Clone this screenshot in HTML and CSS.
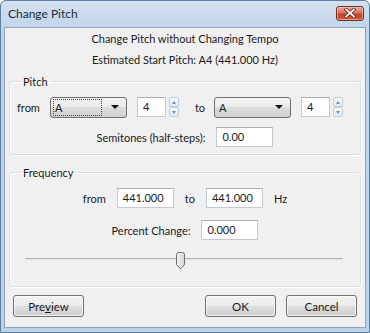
FILE: index.html
```html
<!DOCTYPE html>
<html lang="en">
<head>
    <meta charset="UTF-8">
    <title>Change Pitch</title>
    <link rel="stylesheet" href="styles.css">
</head>
<body>
    <div class="window">
        <div class="titlebar">
            <span class="title">Change Pitch</span>
            <span class="close">
                <svg width="12" height="10" viewBox="0 0 12 10">
                    <path d="M2 1.5 L10 8.5 M10 1.5 L2 8.5" stroke="#5a1a10" stroke-width="3.2" stroke-linecap="square"/>
                    <path d="M2 1.5 L10 8.5 M10 1.5 L2 8.5" stroke="#fff" stroke-width="1.8" stroke-linecap="square"/>
                </svg>
            </span>
        </div>

        <div class="client">
            <p class="info">Change Pitch without Changing Tempo</p>
            <p class="info">Estimated Start Pitch: A4 (441.000 Hz)</p>

            <fieldset class="group">
                <legend>Pitch</legend>
                <div class="row pitch-row">
                    <span class="lbl">from</span>
                    <div class="combo focused"><span class="combo-text">A</span><span class="combo-arrow"></span></div>
                    <div class="spin">
                        <div class="edit small">4</div>
                        <div class="spin-btns">
                            <span class="spin-btn"><i class="up"></i></span>
                            <span class="spin-btn"><i class="down"></i></span>
                        </div>
                    </div>
                    <span class="lbl to">to</span>
                    <div class="combo"><span class="combo-text">A</span><span class="combo-arrow"></span></div>
                    <div class="spin">
                        <div class="edit small">4</div>
                        <div class="spin-btns">
                            <span class="spin-btn"><i class="up"></i></span>
                            <span class="spin-btn"><i class="down"></i></span>
                        </div>
                    </div>
                </div>
                <div class="row centered second">
                    <span class="lbl">Semitones (half-steps):</span>
                    <div class="edit">0.00</div>
                </div>
            </fieldset>

            <fieldset class="group freq">
                <legend>Frequency</legend>
                <div class="row centered">
                    <span class="lbl">from</span>
                    <div class="edit">441.000</div>
                    <span class="lbl">to</span>
                    <div class="edit">441.000</div>
                    <span class="lbl">Hz</span>
                </div>
                <div class="row centered percent">
                    <span class="lbl">Percent Change:</span>
                    <div class="edit">0.000</div>
                </div>
                <div class="slider">
                    <div class="track"></div>
                    <svg class="thumb" width="11" height="18" viewBox="0 0 11 18">
                        <defs>
                            <linearGradient id="tg" x1="0" y1="0" x2="1" y2="0">
                                <stop offset="0" stop-color="#f4f4f4"/>
                                <stop offset="1" stop-color="#d6d6d6"/>
                            </linearGradient>
                        </defs>
                        <path d="M1.5 2.5 Q1.5 0.5 3.5 0.5 L7.5 0.5 Q9.5 0.5 9.5 2.5 L9.5 12.5 L5.5 17 L1.5 12.5 Z" fill="url(#tg)" stroke="#6f6f6f"/>
                    </svg>
                </div>
            </fieldset>

            <div class="buttons">
                <button class="btn">Pre<u>v</u>iew</button>
                <span class="spacer"></span>
                <button class="btn">OK</button>
                <button class="btn">Cancel</button>
            </div>
        </div>
    </div>
</body>
</html>
```

FILE: styles.css
```css
body {
    margin: 0;
    padding: 0;
    font-family: Lato, "Liberation Sans", sans-serif;
    font-size: 11px;
    color: #1a1a1a;
}
.window {
    width: 370px;
    height: 333px;
    box-sizing: border-box;
    border: 1px solid #5f7f9f;
    border-radius: 6px 6px 0 0;
    background: linear-gradient(#d3e1f1, #bfd3ea 30px, #bcd1e9);
    display: flex;
    flex-direction: column;
}
.titlebar {
    height: 26px;
    display: flex;
    align-items: center;
    padding: 0 5px 0 7px;
}
.title {
    flex: 1;
    font-size: 12px;
    color: #1b2a3c;
    margin-top: -2px;
}
.close {
    width: 28px;
    height: 15px;
    margin-top: -2px;
    box-sizing: border-box;
    border: 1px solid #7a2c22;
    border-radius: 3px;
    background: linear-gradient(#e9a99a, #d6735e 45%, #c0432c 55%, #cf5c3f);
    display: flex;
    justify-content: center;
    align-items: center;
    box-shadow: inset 0 0 0 1px rgba(255, 220, 210, 0.5);
}
.client {
    flex: 1;
    margin: 0 3px 4px;
    border: 1px solid #8fa3bb;
    background: #f0f0f0;
    padding: 0 4px;
    display: flex;
    flex-direction: column;
}
.info {
    margin: 6px 0 0;
    line-height: 15px;
    text-align: center;
}
.info:first-child {
    margin-top: 3px;
}
.group {
    margin: 7px 0 0;
    border: 1px solid #d5dfe5;
    border-radius: 3px;
    padding: 8px 7px 7px;
    box-shadow: inset 1px 1px 0 #fff, 1px 1px 0 #fff;
}
.group legend {
    padding: 0 2px;
    margin-left: 4px;
    line-height: 15px;
}
.group.freq {
    margin-top: 10px;
    padding-top: 8px;
    padding-bottom: 16px;
}
.row {
    display: flex;
    align-items: center;
    height: 20px;
}
.row.centered {
    justify-content: center;
    gap: 11px;
}
.row.second {
    margin-top: 10px;
}
.row.percent {
    margin-top: 12px;
}
.lbl {
    white-space: nowrap;
}
.pitch-row .combo {
    margin-left: 10px;
}
.pitch-row .spin {
    margin-left: 10px;
}
.pitch-row .to {
    margin-left: 16px;
}
.pitch-row .to + .combo {
    margin-left: 9px;
}
.combo {
    width: 77px;
    height: 21px;
    box-sizing: border-box;
    border: 1px solid #707070;
    border-radius: 3px;
    background: linear-gradient(#f2f2f2, #ebebeb 50%, #dddddd 50%, #cfcfcf);
    display: flex;
    align-items: center;
    padding: 2px;
}
.combo-text {
    flex: 1;
    height: 15px;
    line-height: 15px;
    padding-left: 1px;
    border: 1px dotted transparent;
}
.combo.focused .combo-text {
    border-color: #444;
}
.combo-arrow {
    width: 0;
    height: 0;
    margin: 0 5px 0 9px;
    border-left: 4px solid transparent;
    border-right: 4px solid transparent;
    border-top: 4px solid #111;
}
.edit {
    width: 57px;
    height: 20px;
    box-sizing: border-box;
    border: 1px solid #c5c9d1;
    border-top-color: #abadb3;
    background: #fff;
    padding: 2px 5px;
    line-height: 14px;
}
.edit.small {
    width: 29px;
}
.spin {
    display: flex;
    align-items: center;
    gap: 3px;
}
.spin-btns {
    display: flex;
    flex-direction: column;
    width: 10px;
    height: 20px;
}
.spin-btn {
    flex: 1;
    box-sizing: border-box;
    border: 1px solid #c2cfdd;
    border-radius: 2px;
    background: linear-gradient(#f7f9fb, #e3e9f0);
    display: flex;
    justify-content: center;
    align-items: center;
}
.spin-btn i {
    width: 0;
    height: 0;
    border-left: 2.5px solid transparent;
    border-right: 2.5px solid transparent;
}
.spin-btn .up {
    border-bottom: 3px solid #6b8fb8;
}
.spin-btn .down {
    border-top: 3px solid #6b8fb8;
}
.slider {
    position: relative;
    height: 18px;
    margin: 12px 10px 0 8px;
}
.track {
    position: absolute;
    left: 0;
    right: 0;
    top: 6px;
    height: 1px;
    background: #b3b3b3;
    border-bottom: 1px solid #e6e6e6;
}
.thumb {
    position: absolute;
    left: 150px;
    top: 0;
}
.buttons {
    display: flex;
    align-items: center;
    gap: 10px;
    margin: 8px 4px 0;
}
.spacer {
    flex: 1;
}
.btn {
    width: 71px;
    height: 22px;
    font-family: inherit;
    font-size: 11.5px;
    color: #1a1a1a;
    border: 1px solid #707070;
    border-radius: 3px;
    background: linear-gradient(#f2f2f2, #ebebeb 50%, #dddddd 50%, #cfcfcf);
    box-shadow: inset 0 0 0 1px rgba(255, 255, 255, 0.7);
    padding: 0;
}
.btn u {
    text-decoration-thickness: 1px;
}
```
